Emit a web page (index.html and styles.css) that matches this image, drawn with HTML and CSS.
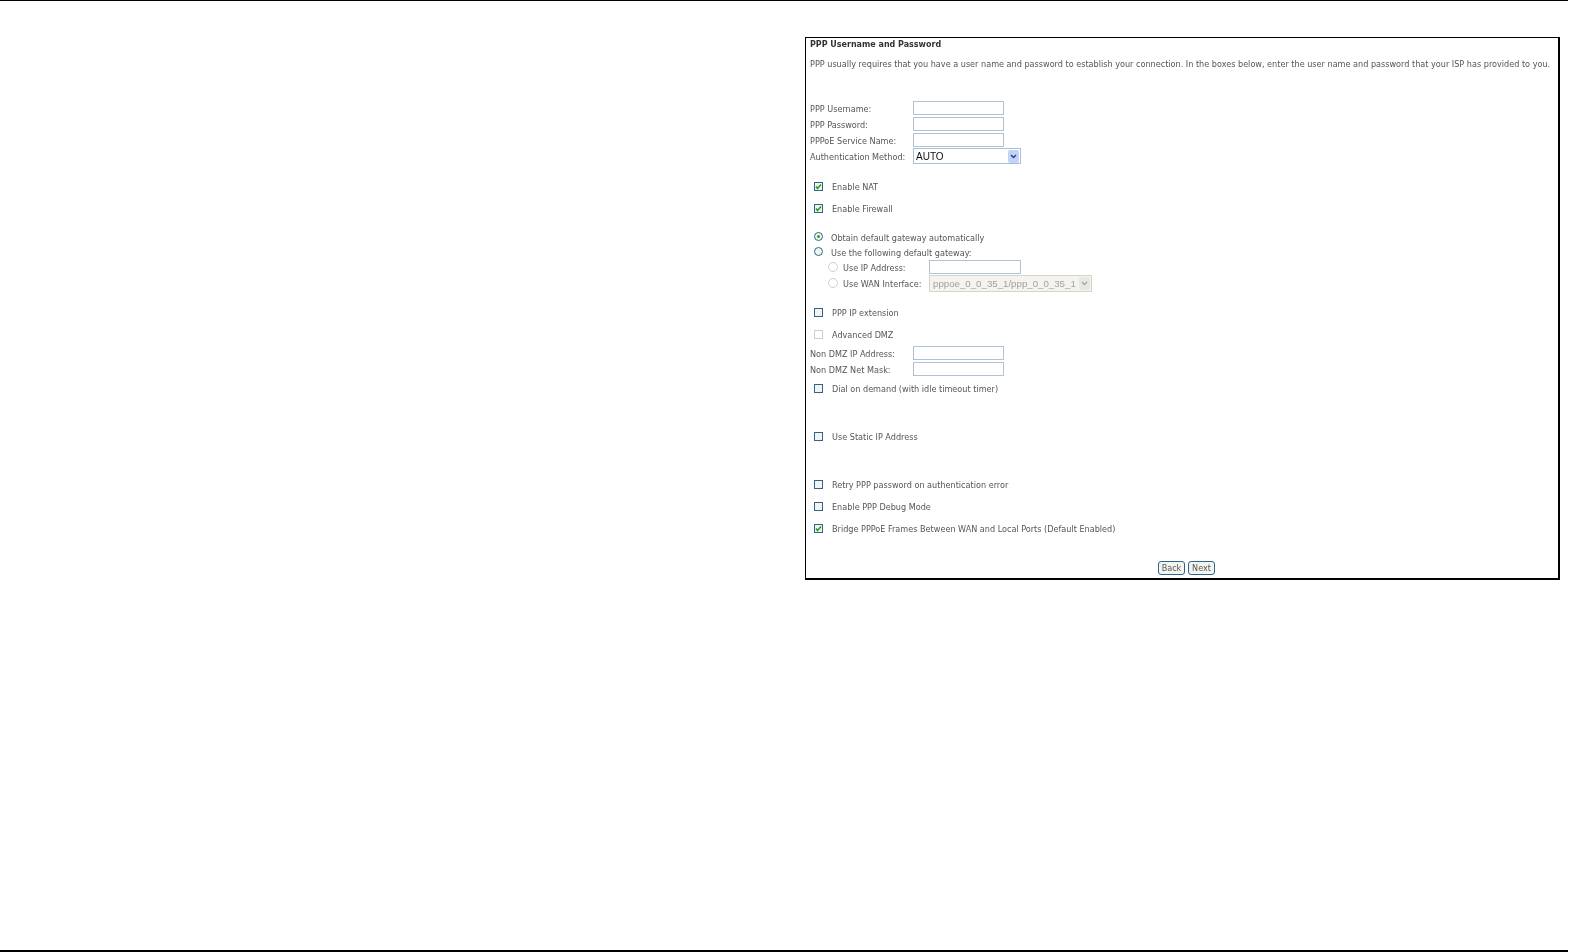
FILE: index.html
```html
<!DOCTYPE html>
<html lang="en">
<head>
  <meta charset="UTF-8" />
  <title>PPP Username and Password</title>
  <link rel="stylesheet" href="styles.css">
</head>
<body>
  <div class="rule"></div>

  <main class="panel">
    <div class="panel-body">
      <h2 class="title">PPP Username and Password</h2>
      <p class="intro">PPP usually requires that you have a user name and password to establish your connection. In the boxes below, enter the user name and password that your ISP has provided to you.</p>

      <div class="field first"><label>PPP Username:</label><span class="input"></span></div>
      <div class="field"><label>PPP Password:</label><span class="input"></span></div>
      <div class="field"><label>PPPoE Service Name:</label><span class="input"></span></div>
      <div class="field">
        <label>Authentication Method:</label>
        <span class="select">AUTO<span class="arrow"><svg width="9" height="9" viewBox="0 0 9 9"><path d="M2 3l2.5 2.5L7 3" fill="none" stroke="#27408b" stroke-width="1.5"/></svg></span></span>
      </div>

      <div class="check gap-11"><span class="box"><svg width="7" height="7" viewBox="0 0 7 7"><path d="M1 3.500l1.500 2L6 1.500" fill="none" stroke="#22a022" stroke-width="1.500"/></svg></span><label>Enable NAT</label></div>
      <div class="check"><span class="box"><svg width="7" height="7" viewBox="0 0 7 7"><path d="M1 3.500l1.500 2L6 1.500" fill="none" stroke="#22a022" stroke-width="1.500"/></svg></span><label>Enable Firewall</label></div>

      <div class="radio gap-10"><span class="dot on"></span><label>Obtain default gateway automatically</label></div>
      <div class="radio"><span class="dot"></span><label>Use the following default gateway:</label></div>
      <div class="sub"><span class="dot off"></span><label>Use IP Address:</label><span class="input wide"></span></div>
      <div class="sub">
        <span class="dot off"></span><label>Use WAN Interface:</label>
        <span class="select disabled">pppoe_0_0_35_1/ppp_0_0_35_1<span class="arrow"><svg width="9" height="9" viewBox="0 0 9 9"><path d="M2 3l2.500 2.500L7 3" fill="none" stroke="#a8a8a8" stroke-width="1.500"/></svg></span></span>
      </div>

      <div class="check gap-10"><span class="box"></span><label>PPP IP extension</label></div>
      <div class="check"><span class="box off"></span><label>Advanced DMZ</label></div>
      <div class="field"><label>Non DMZ IP Address:</label><span class="input"></span></div>
      <div class="field"><label>Non DMZ Net Mask:</label><span class="input"></span></div>
      <div class="check"><span class="box"></span><label>Dial on demand (with idle timeout timer)</label></div>

      <div class="check gap-26"><span class="box"></span><label>Use Static IP Address</label></div>

      <div class="check gap-26"><span class="box"></span><label>Retry PPP password on authentication error</label></div>
      <div class="check"><span class="box"></span><label>Enable PPP Debug Mode</label></div>
      <div class="check"><span class="box"><svg width="7" height="7" viewBox="0 0 7 7"><path d="M1 3.500l1.500 2L6 1.500" fill="none" stroke="#22a022" stroke-width="1.500"/></svg></span><label>Bridge PPPoE Frames Between WAN and Local Ports (Default Enabled)</label></div>

      <div class="buttons">
        <button type="button">Back</button>
        <button type="button">Next</button>
      </div>
    </div>
  </main>

  <div class="rule bottom"></div>
</body>
</html>
```

FILE: styles.css
```css
* {margin: 0; padding: 0; box-sizing: border-box;}
body {
  font-family: 'DejaVu Sans Condensed', 'DejaVu Sans', sans-serif;
  font-stretch: condensed;
  font-size: 9.03px;
  background: #fff;
  color: #555;
  height: 952px;
  display: flex;
  flex-direction: column;
  overflow: hidden;
}

.rule {
  height: 1px;
  background: #000;
  margin-right: 1px;
}
.rule.bottom {
  margin-top: auto;
  height: 2px;
}

.panel {
  width: 755px;
  height: 543px;
  margin: 36px 0 0 805px;
  border: 1px solid #000;
  border-right-width: 2px;
  border-bottom-width: 2px;
}
/* the source capture is soft, the frame is not */
.panel-body {
  filter: blur(0.4px);
}

.title {
  height: 12px;
  line-height: 12px;
  padding-left: 4px;
  font-size: 8.9px;
  font-weight: bold;
  color: #333;
}
.intro {
  height: 12px;
  line-height: 12px;
  margin-top: 8px;
  padding-left: 4px;
  white-space: nowrap;
}

label {
  padding-top: 2px;
  white-space: nowrap;
}
.check label {
  padding-top: 1px;
}

/* label + control rows */
.field {
  display: flex;
  align-items: center;
  height: 16px;
  padding-left: 4px;
}
.field.first {
  margin-top: 30px;
}
.field label {
  width: 103px;
}

.input {
  display: block;
  width: 91px;
  height: 14px;
  background: #fff;
  border: 1px solid #b0c2d3;
}
.input.wide {
  width: 92px;
}

.select {
  display: flex;
  align-items: center;
  justify-content: space-between;
  width: 108px;
  height: 16px;
  padding: 0 1px 0 2px;
  border: 1px solid #a9bfd3;
  font-family: 'Liberation Sans', sans-serif;
  font-stretch: normal;
  font-size: 10px;
  color: #111;
}
.select.disabled {
  width: 163px;
  height: 17px;
  padding-left: 3px;
  background: #f4f3ee;
  border-color: #d4d4cc;
  font-size: 9.7px;
  color: #a0a0a0;
}
.arrow {
  display: flex;
  width: 11px;
  height: 13px;
  align-items: center;
  justify-content: center;
  border-radius: 2px;
  background: #c3d3f5;
}
.disabled .arrow {
  background: #e8e8e2;
}

/* checkbox rows */
.check {
  display: flex;
  align-items: center;
  height: 22px;
  padding-left: 8px;
}
.box {
  display: flex;
  align-items: center;
  justify-content: center;
  width: 9px;
  height: 9px;
  margin-right: 9px;
  border: 1px solid #2f6390;
  background: #f4f4ee;
}
.box.off {
  border-color: #cfcfc8;
  background: #fff;
}

/* radio rows */
.radio {
  display: flex;
  align-items: center;
  height: 15px;
  padding-left: 8px;
}
.sub {
  display: flex;
  align-items: center;
  height: 16px;
  padding-left: 22px;
}
.sub label {
  width: 86px;
}
.dot {
  display: flex;
  align-items: center;
  justify-content: center;
  width: 9px;
  height: 9px;
  margin-right: 8px;
  border: 1px solid #2f6390;
  border-radius: 50%;
  background: #f4f4ee;
}
.dot.on::after {
  content: '';
  width: 3px;
  height: 3px;
  border-radius: 50%;
  background: #22a022;
}
.dot.off {
  width: 10px;
  height: 10px;
  margin-right: 5px;
  border-color: #cfcfc8;
  background: #fff;
}

.gap-10 { margin-top: 10px; }
.gap-11 { margin-top: 11px; }
.gap-26 { margin-top: 26px; }

.buttons {
  display: flex;
  justify-content: center;
  gap: 3px;
  margin-top: 22px;
  padding-left: 9px;
}
.buttons button {
  height: 14px;
  width: 27px;
  border: 1px solid #2f6390;
  border-radius: 3px;
  background: #f4f4ee;
  font-family: inherit;
  font-stretch: condensed;
  font-size: 9px;
  color: #555;
}
```
